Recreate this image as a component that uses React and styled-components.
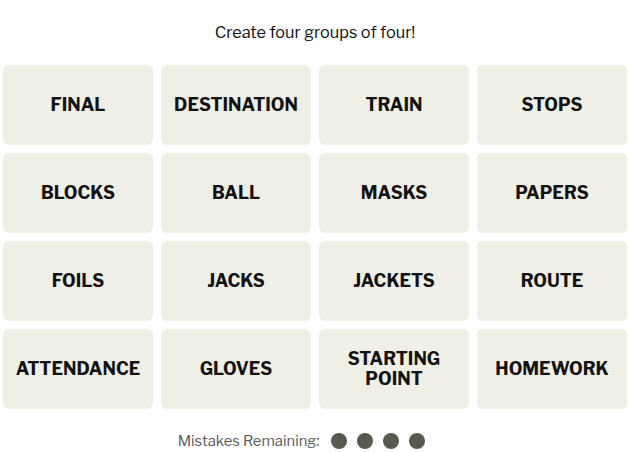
import React from "react";
import styled, { createGlobalStyle } from "styled-components";

const words = [
  "FINAL", "DESTINATION", "TRAIN", "STOPS",
  "BLOCKS", "BALL", "MASKS", "PAPERS",
  "FOILS", "JACKS", "JACKETS", "ROUTE",
  "ATTENDANCE", "GLOVES", "STARTING POINT", "HOMEWORK",
];

const GlobalStyle = createGlobalStyle`
  * { margin: 0; padding: 0; box-sizing: border-box; }
  body {
    background: #ffffff;
    font-family: "Libre Franklin", Roboto, "Liberation Sans", sans-serif;
    color: #121212;
  }
`;

const Page = styled.div`
  width: 630px;
  padding: 20px 3px 0 3px;
`;

const Prompt = styled.p`
  text-align: center;
  font-size: 16.3px;
  line-height: 24px;
  font-weight: 400;
  margin-bottom: 21px;
`;

const Grid = styled.div`
  display: grid;
  grid-template-columns: repeat(4, 150px);
  grid-auto-rows: 80px;
  gap: 8px;
`;

const Tile = styled.button`
  border: none;
  border-radius: 6px;
  background: #efefe6;
  color: #121212;
  font-family: inherit;
  font-size: 17.7px;
  font-weight: 700;
  line-height: 20px;
  text-transform: uppercase;
  display: flex;
  align-items: center;
  justify-content: center;
  text-align: center;
  padding: 0 10px;
`;

const Mistakes = styled.div`
  display: flex;
  align-items: center;
  justify-content: center;
  gap: 12px;
  margin-top: 23px;
  padding-right: 27px;
  font-size: 14.8px;
  color: #5a5a5a;
`;

const Dots = styled.div`
  display: flex;
  gap: 10px;
`;

const Dot = styled.span`
  width: 16px;
  height: 16px;
  border-radius: 50%;
  background: #5a594e;
`;

export default function App() {
  return (
    <Page>
      <GlobalStyle />
      <Prompt>Create four groups of four!</Prompt>
      <Grid>
        {words.map((w) => (
          <Tile key={w}>{w}</Tile>
        ))}
      </Grid>
      <Mistakes>
        Mistakes Remaining:
        <Dots>
          {[0, 1, 2, 3].map((i) => (
            <Dot key={i} />
          ))}
        </Dots>
      </Mistakes>
    </Page>
  );
}
